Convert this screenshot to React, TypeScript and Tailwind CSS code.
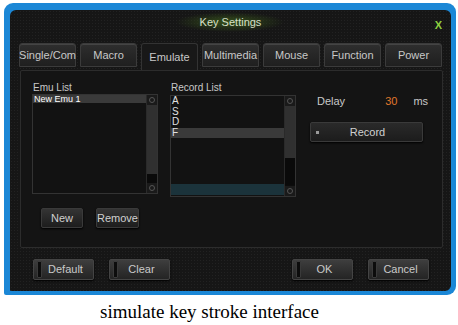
import React from "react";

const tabs = ["Single/Com", "Macro", "Emulate", "Multimedia", "Mouse", "Function", "Power"];

function Tab({ label, active }: { label: string; active?: boolean }) {
  return (
    <div
      className={
        "w-[57px] h-[24px] flex items-center justify-center rounded-t-[3px] border text-[11px] text-[#c8c8c8] " +
        (active
          ? "bg-[#181818] border-[#333] border-b-0 h-[27px] self-start"
          : "bg-gradient-to-b from-[#2e2e2e] to-[#1f1f1f] border-[#3b3b3b] shadow-[inset_0_1px_0_#444]")
      }
    >
      {label}
    </div>
  );
}

function SmallBtn({ label, w }: { label: string; w: string }) {
  return (
    <div
      className={
        w +
        " h-[20px] flex items-center justify-center rounded-[2px] border border-[#3a3a3a] bg-gradient-to-b from-[#343434] to-[#1d1d1d] text-[11px] text-[#d0d0d0] shadow-[0_1px_2px_#000]"
      }
    >
      {label}
    </div>
  );
}

function BottomBtn({ label }: { label: string }) {
  return (
    <div className="w-[61px] h-[21px] flex items-center rounded-[2px] border border-[#444] bg-gradient-to-b from-[#3e3e3e] to-[#242424] shadow-[0_1px_2px_#000]">
      <div className="ml-[3px] w-[5px] h-[17px] bg-[#0c0c0c] border border-[#3a3a3a] rounded-[1px]" />
      <div className="flex-1 text-center text-[11px] text-[#cacaca] pr-[4px]">{label}</div>
    </div>
  );
}

function Scrollbar({ grayEnd, darkEnd }: { grayEnd: number; darkEnd: number }) {
  return (
    <div className="w-[11px] h-full flex flex-col bg-[#0c0c0c] border-l border-[#2a2a2a]">
      <div className="h-[10px] flex items-center justify-center bg-[#1a1a1a]">
        <div className="w-[6px] h-[6px] rounded-full border border-[#555]" />
      </div>
      <div className="bg-[#303030]" style={{ height: grayEnd }} />
      <div className="bg-[#0a0a0a]" style={{ height: darkEnd }} />
      <div className="flex-1" />
      <div className="h-[10px] flex items-center justify-center bg-[#1a1a1a]">
        <div className="w-[6px] h-[6px] rounded-full border border-[#555]" />
      </div>
    </div>
  );
}

export default function App() {
  return (
    <div
      className="w-[458px] h-[325px] bg-white overflow-hidden"
      style={{ fontFamily: '"Liberation Sans", Arial, sans-serif' }}
    >
      <div className="ml-[4px] mt-[3px] w-[452px] h-[292px] bg-[#1b87d6] rounded-[9px] rounded-bl-[2px] pl-[6px] pt-[7px] pr-[5px] pb-[4px]">
        <div className="w-full h-full bg-[#161616] rounded-[6px] rounded-bl-[1px] flex flex-col bg-[radial-gradient(circle,#222_1px,transparent_1px)] bg-[length:3px_3px]">
          {/* title */}
          <div className="relative h-[22px] flex items-center justify-center mt-[1px]">
            <div className="absolute left-[165px] top-[1px] w-[110px] h-[20px] rounded-full bg-[radial-gradient(ellipse,#35501a_0%,transparent_70%)]" />
            <span className="relative text-[11px] text-[#d8e0c8]">Key Settings</span>
            <span className="absolute right-[9px] top-[6px] text-[11px] font-bold text-[#8fd040]">X</span>
          </div>
          {/* tabs */}
          <div className="flex gap-[4px] pl-[9px] mt-[10px] h-[27px]">
            {tabs.map((t) => (
              <Tab key={t} label={t} active={t === "Emulate"} />
            ))}
          </div>
          {/* panel */}
          <div className="ml-[10px] w-[423px] h-[178px] bg-[#141414] border border-[#2c2c2c] rounded-[2px] flex">
            {/* emu list */}
            <div className="ml-[11px] w-[126px] flex flex-col">
              <div className="mt-[9px] h-[14px] text-[10px] text-[#c8c8c8] pl-[1px]">Emu List</div>
              <div className="h-[100px] border border-[#333] bg-[#121212] flex">
                <div className="flex-1">
                  <div className="h-[8px] bg-[#3a3a3a] text-[9px] leading-[8px] text-white pl-[1px]">New Emu 1</div>
                </div>
                <Scrollbar grayEnd={69} darkEnd={9} />
              </div>
              <div className="flex mt-[14px]">
                <div className="ml-[9px]">
                  <SmallBtn label="New" w="w-[42px]" />
                </div>
                <div className="ml-[13px]">
                  <SmallBtn label="Remove" w="w-[43px]" />
                </div>
              </div>
            </div>
            {/* record list */}
            <div className="ml-[12px] w-[126px] flex flex-col">
              <div className="mt-[9px] h-[15px] text-[10px] text-[#c8c8c8] pl-[1px]">Record List</div>
              <div className="h-[102px] border border-[#333] bg-[#121212] flex">
                <div className="flex-1 flex flex-col">
                  {["A", "S", "D", "F"].map((k) => (
                    <div
                      key={k}
                      className={
                        "h-[10.5px] text-[10px] leading-[10px] text-[#e0e0e0] pl-[1px] " +
                        (k === "F" ? "bg-[#3a3a3a]" : "")
                      }
                    >
                      {k}
                    </div>
                  ))}
                  <div className="flex-1" />
                  <div className="h-[11px] bg-[#1b333b] mb-[1px]" />
                </div>
                <Scrollbar grayEnd={52} darkEnd={27} />
              </div>
            </div>
            {/* delay */}
            <div className="ml-[14px] w-[114px] flex flex-col">
              <div className="mt-[23px] flex items-center h-[14px] text-[11px]">
                <span className="ml-[7px] text-[#c8c8c8]">Delay</span>
                <span className="ml-[40px] text-[#e0782c]">30</span>
                <span className="ml-[16px] text-[#c8c8c8]">ms</span>
              </div>
              <div className="mt-[14px] h-[20px] w-[113px] rounded-[2px] border border-[#3a3a3a] bg-gradient-to-b from-[#2a2a2a] to-[#1c1c1c] flex items-center shadow-[0_1px_2px_#000]">
                <div className="ml-[5px] w-[3px] h-[3px] bg-[#9a9a9a]" />
                <div className="flex-1 text-center text-[11px] text-[#d0d0d0] pr-[6px]">Record</div>
              </div>
            </div>
          </div>
          {/* bottom buttons */}
          <div className="flex mt-[11px] pl-[23px]">
            <BottomBtn label="Default" />
            <div className="ml-[15px]">
              <BottomBtn label="Clear" />
            </div>
            <div className="ml-[122px]">
              <BottomBtn label="OK" />
            </div>
            <div className="ml-[15px]">
              <BottomBtn label="Cancel" />
            </div>
          </div>
        </div>
      </div>
      <div
        className="mt-[6px] pl-[100px] text-[19px] leading-[22px] text-black"
        style={{ fontFamily: '"Liberation Serif", serif' }}
      >
        simulate key stroke interface
      </div>
    </div>
  );
}
